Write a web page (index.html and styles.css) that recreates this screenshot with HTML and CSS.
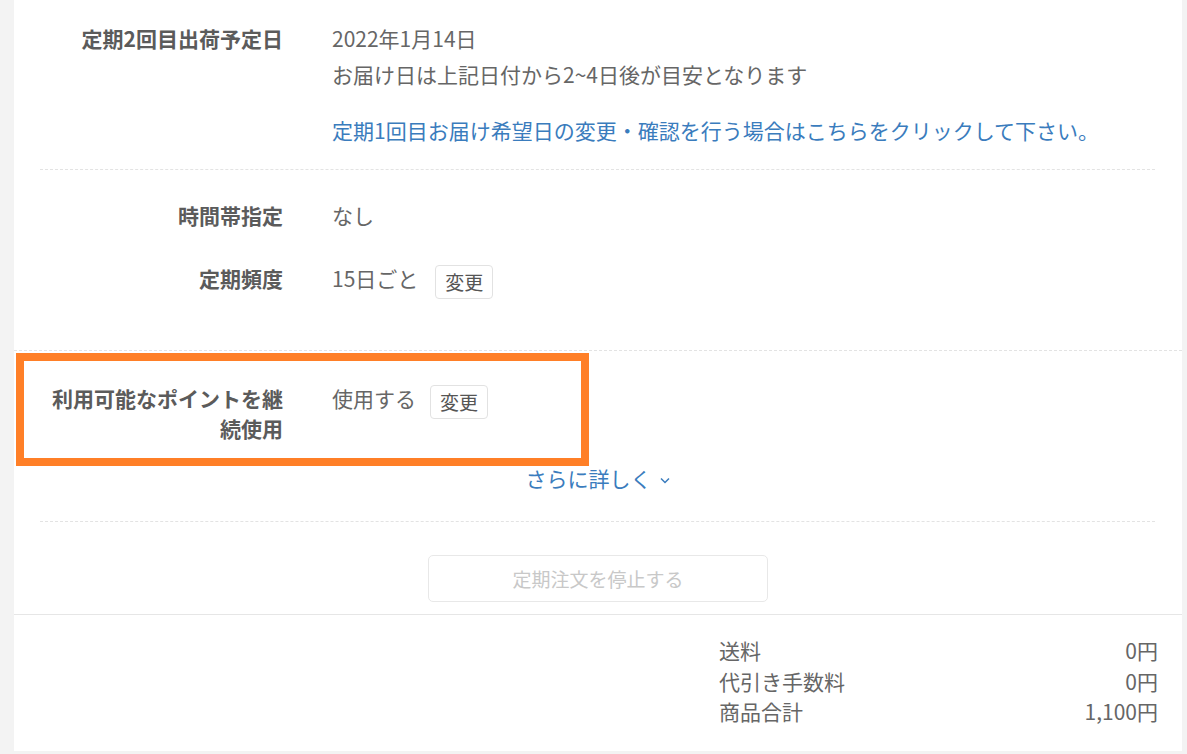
FILE: index.html
```html
<!DOCTYPE html>
<html lang="ja">
<head>
<meta charset="utf-8">
<title>定期注文</title>
<link rel="stylesheet" href="styles.css">
</head>
<body>
<div class="card">
  <section class="sec sec-top">
    <div class="row">
      <div class="label">定期2回目出荷予定日</div>
      <div class="value">
        <div>2022年1月14日</div>
        <div>お届け日は上記日付から2~4日後が目安となります</div>
        <a class="link change-link" href="#">定期1回目お届け希望日の変更・確認を行う場合はこちらをクリックして下さい。</a>
      </div>
    </div>
  </section>

  <section class="sec-mid">
    <div class="row">
      <div class="label">時間帯指定</div>
      <div class="value">なし</div>
    </div>
    <div class="row row-second">
      <div class="label">定期頻度</div>
      <div class="value value-inline"><span>15日ごと</span><button class="btn-small" type="button">変更</button></div>
    </div>
  </section>

  <section class="sec-points">
    <div class="row row-points">
      <div class="label">利用可能なポイントを継続使用</div>
      <div class="value value-inline"><span>使用する</span><button class="btn-small btn-points" type="button">変更</button></div>
      <div class="highlight"></div>
    </div>
    <div class="more"><a class="link" href="#">さらに詳しく<svg class="chev" width="10" height="7" viewBox="0 0 10 7"><path d="M1 1.5 L5 5.5 L9 1.5" fill="none" stroke="#3a7cbd" stroke-width="1.5"/></svg></a></div>
  </section>

  <section class="sec-stop">
    <button class="btn-stop" type="button" disabled>定期注文を停止する</button>
  </section>

  <section class="summary">
    <div class="sum-table">
      <div class="sum-row"><span>送料</span><span>0円</span></div>
      <div class="sum-row"><span>代引き手数料</span><span>0円</span></div>
      <div class="sum-row"><span>商品合計</span><span>1,100円</span></div>
    </div>
  </section>
</div>
</body>
</html>
```

FILE: styles.css
```css
html, body {
  margin: 0;
  padding: 0;
}
body {
  background: #f3f3f3;
  font-family: "Noto Sans CJK JP", "Noto Sans", sans-serif;
  font-size: 21px;
  color: #666;
  width: 1187px;
  height: 754px;
  overflow: hidden;
}
.card {
  margin-left: 14px;
  width: 1168px;
  height: 751px;
  background: #fff;
}
.row {
  display: flex;
  align-items: flex-start;
  position: relative;
}
.label {
  width: 243px;
  flex: none;
  text-align: right;
  font-weight: bold;
  color: #5b5b5b;
  line-height: 30px;
  padding-top: 3px;
  margin-right: 49px;
}
.value {
  line-height: 36px;
  color: #666;
}
.link {
  color: #3a7cbd;
  text-decoration: none;
}
.change-link {
  display: block;
  margin-top: 20px;
}
.sec-top {
  margin: 0 27px 0 26px;
  padding: 20px 0 21px 0;
  border-bottom: 1px dashed #e3e3e3;
}
.sec-mid {
  padding: 27px 27px 51px 26px;
  border-bottom: 1px dashed #e3e3e3;
}
.row-second {
  margin-top: 27px;
}
.value-inline {
  display: flex;
  align-items: flex-start;
}
.btn-small {
  font-family: inherit;
  font-size: 19px;
  color: #555;
  background: #fff;
  border: 1px solid #e2e2e2;
  border-radius: 4px;
  padding: 0 9px;
  height: 34px;
  line-height: 32px;
  margin-left: 17px;
  margin-top: 5px;
}
.btn-points {
  margin-left: 14px;
}
.sec-points {
  margin: 0 27px 0 26px;
  padding-top: 29px;
  border-bottom: 1px dashed #e3e3e3;
  padding-bottom: 25px;
}
.row-points .label {
  line-height: 30px;
}
.highlight {
  position: absolute;
  left: -24px;
  top: -27px;
  width: 557px;
  height: 97px;
  border: 8px solid #ff7f27;
  pointer-events: none;
}
.more {
  text-align: center;
  line-height: 36px;
  margin-top: 17px;
}
.chev {
  margin-left: 8px;
  vertical-align: 3px;
}
.sec-stop {
  display: flex;
  justify-content: center;
  padding: 33px 0 12px;
  border-bottom: 1px solid #e6e6e6;
}
.btn-stop {
  width: 340px;
  height: 47px;
  font-family: inherit;
  font-size: 19px;
  color: #c8c8c8;
  background: #fff;
  border: 1px solid #e8e8e8;
  border-radius: 5px;
}
.summary {
  display: flex;
  justify-content: flex-end;
  padding: 20px 24px 0 0;
}
.sum-table {
  width: 439px;
  line-height: 30.5px;
  color: #666;
}
.sum-row {
  display: flex;
  justify-content: space-between;
}
```
